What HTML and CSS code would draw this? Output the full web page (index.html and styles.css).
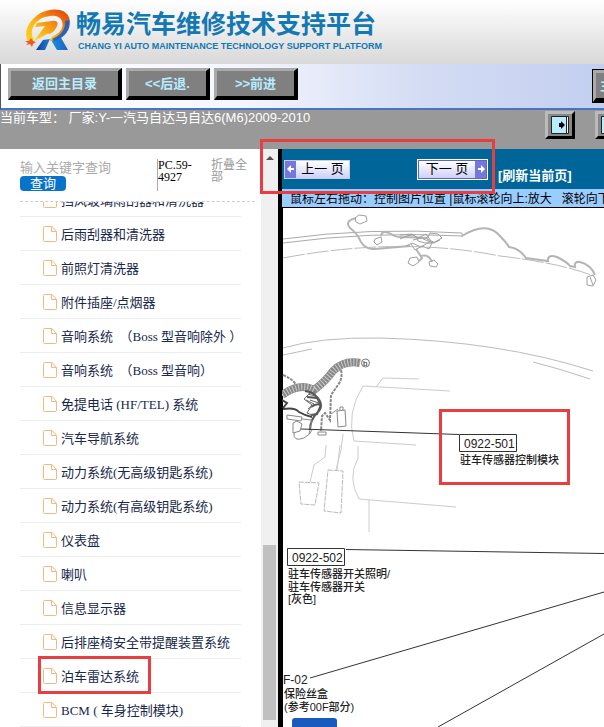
FILE: index.html
```html
<!DOCTYPE html>
<html lang="zh-CN">
<head>
<meta charset="utf-8">
<title>畅易汽车维修技术支持平台</title>
<link rel="stylesheet" href="styles.css">
</head>
<body>
<header class="banner">
  <svg class="logo" width="46" height="42" viewBox="0 0 46 42" aria-hidden="true">
    <defs>
      <linearGradient id="fire" x1="0" y1="1" x2="1" y2="0"><stop offset="0" stop-color="#ffd21a"/><stop offset=".4" stop-color="#fdb913"/><stop offset=".75" stop-color="#ee6a10"/><stop offset="1" stop-color="#dc3c0c"/></linearGradient>
      <linearGradient id="ice" x1="0" y1="0" x2="1" y2="0"><stop offset="0" stop-color="#123b9c"/><stop offset=".5" stop-color="#1b8fe0"/><stop offset="1" stop-color="#1e5fc0"/></linearGradient>
      <linearGradient id="bolt" x1="0" y1="1" x2="1" y2="0"><stop offset="0" stop-color="#ffdf20"/><stop offset="1" stop-color="#f07a10"/></linearGradient>
    </defs>
    <path d="M11 41 L18 31 L25 30 L20 41 Z M26 31 L35 27 L43 41 L32 41 Z" fill="url(#ice)"/>
    <path d="M4 34 C-2 25 2 13 14 5 C26 -2 42 -1 44.500 10 C46 21 37 30 24 32 L28 27 C36 24 39 18 37 12 C34 5 25 6 17 9 C8 14 4 23 9 31 Z" fill="url(#fire)"/>
    <path d="M40 12 C41 20 36 26 27 30 L30 32 C40 28 46 21 44.500 11 Z" fill="#2b62b5"/>
    <path d="M12 14 L27 12 C33 11 34 15 31 19 C29 23 26 25 22 25 L9 32 L20 17 L10 18 Z" fill="url(#bolt)"/>
    <path d="M0 32 L4 32 L6 29 L8 32 L11 33 L8 35 L7 38 L5 35 L1 36 L3 34 Z" fill="#ee5a20"/>
  </svg>
  <div class="brand">
    <h1 class="brand-name">畅易汽车维修技术支持平台</h1>
    <p class="brand-sub">CHANG YI AUTO MAINTENANCE TECHNOLOGY SUPPORT PLATFORM</p>
  </div>
</header>
<nav class="toolbar">
  <button class="bevel bevel-wide">返回主目录</button>
  <button class="bevel">&lt;&lt;后退.</button>
  <button class="bevel">&gt;&gt;前进</button>
  <button class="bevel bevel-last">主页</button>
</nav>
<div class="status">
  <p class="model">当前车型： 厂家:Y-一汽马自达马自达6(M6)2009-2010</p>
  <div class="panes">
    <button class="pane" aria-label="展开"><svg width="18" height="18" viewBox="0 0 18 18"><path d="M.5.5h17v17H.5z" fill="#b8ecff" stroke="#222"/><path d="M15.500 1v16" stroke="#222"/><path d="M16.500 1v16" stroke="#fff"/><path d="M8 7h2V5l4 4-4 4v-2H8z"/></svg></button>
    <button class="pane" aria-label="收起"><svg width="18" height="18" viewBox="0 0 18 18"><path d="M.5.5h17v17H.5z" fill="#b8ecff" stroke="#222"/><path d="M10 7H7V4L3 9l4 5v-3h3z"/></svg></button>
  </div>
</div>
<main class="main">
  <aside class="side">
    <form class="search">
      <div class="field">
        <input class="query" type="text" placeholder="输入关键字查询" aria-label="输入关键字查询">
        <button class="go" type="button">查询</button>
      </div>
      <span class="code">PC.59-4927</span>
      <a class="fold" href="#">折叠全部</a>
    </form>
    <svg class="defs" width="0" height="0" aria-hidden="true"><symbol id="doc" viewBox="0 0 14 16"><path d="M.5 1.500q0-1 1-1H9l4.500 5v9q0 1-1 1h-11q-1 0-1-1zM8.500.5v5h5" fill="none" stroke="#f2b880"/></symbol></svg>
    <ul class="tree">
      <li><a href="#"><svg class="doc"><use href="#doc"/></svg>挡风玻璃雨刮器和清洗器</a></li>
      <li><a href="#"><svg class="doc"><use href="#doc"/></svg>后雨刮器和清洗器</a></li>
      <li><a href="#"><svg class="doc"><use href="#doc"/></svg>前照灯清洗器</a></li>
      <li><a href="#"><svg class="doc"><use href="#doc"/></svg>附件插座/点烟器</a></li>
      <li><a href="#"><svg class="doc"><use href="#doc"/></svg>音响系统　（Boss 型音响除外 ）</a></li>
      <li><a href="#"><svg class="doc"><use href="#doc"/></svg>音响系统　（Boss 型音响）</a></li>
      <li><a href="#"><svg class="doc"><use href="#doc"/></svg>免提电话 (HF/TEL) 系统</a></li>
      <li><a href="#"><svg class="doc"><use href="#doc"/></svg>汽车导航系统</a></li>
      <li><a href="#"><svg class="doc"><use href="#doc"/></svg>动力系统(无高级钥匙系统)</a></li>
      <li><a href="#"><svg class="doc"><use href="#doc"/></svg>动力系统(有高级钥匙系统)</a></li>
      <li><a href="#"><svg class="doc"><use href="#doc"/></svg>仪表盘</a></li>
      <li><a href="#"><svg class="doc"><use href="#doc"/></svg>喇叭</a></li>
      <li><a href="#"><svg class="doc"><use href="#doc"/></svg>信息显示器</a></li>
      <li><a href="#"><svg class="doc"><use href="#doc"/></svg>后排座椅安全带提醒装置系统</a></li>
      <li class="marked"><a href="#"><svg class="doc"><use href="#doc"/></svg>泊车雷达系统</a></li>
      <li><a href="#"><svg class="doc"><use href="#doc"/></svg>BCM ( 车身控制模块)</a></li>
    </ul>
  </aside>
  <div class="scroll"><i class="up"></i><i class="thumb"></i></div>
  <section class="viewer">
    <div class="pager">
      <button class="turn"><span class="arrow"><svg width="8" height="10" viewBox="0 0 8 10"><path d="M0 5l4-4v3h3v2H4v3z" fill="#fff"/></svg></span><span class="turn-text">上一 页</span></button>
      <button class="turn turn-next"><span class="turn-text">下一 页</span><span class="arrow"><svg width="8" height="10" viewBox="0 0 8 10"><path d="M8 5L4 1v3H1v2h3v3z" fill="#fff"/></svg></span></button>
      <a class="reload" href="#">[刷新当前页]</a>
    </div>
    <p class="hint">鼠标左右拖动：控制图片位置 |鼠标滚轮向上:放大 &nbsp; 滚轮向下:缩小</p>
    <svg class="diagram" viewBox="282 208 322 519" role="img" aria-label="驻车传感器位置图">
      <g fill="none" stroke="#aaa" stroke-width="1">
        <path d="M283 239Q370 227 462 233M283 243Q370 231 462 236M462 233v4"/>
        <path d="M283 258Q400 236 500 256Q560 263 594 276" stroke="#bbb" stroke-dasharray="22 2"/>
        <path d="M283 348Q320 337 380 338Q500 341 593 371M283 355l29-6M533 362q28 7 57 17" stroke="#bbb"/>
        <path d="M376 387l7-9 36 1M450 391l-87-5q-17 27-9 55l62 4M358 446v12q-11 20 1 41l97 8M369 500v32" stroke="#ccc"/>
        <path d="M326 445l-1 12-11 8-4 17M343 434l-2 16-5 20M340 445l-3 25" stroke="#ccc"/>
        <path d="M299 482l20 1-4 22-14-1zM328 470l15 1-2 42-17-2z" stroke="#bbb" stroke-dasharray="5 1"/>
      </g>
      <g fill="none" stroke="#b4b4b4" stroke-width="2">
        <path d="M356 218q-12 3-6 10 7 5 11 14 5 8 14 7l35-3M381 236q1-7 10-2 6 4 14 3l22 1M462 236q22-14 35-3 10 10 12 14 10 1 17 11l22 3q-1-7 9-4 10 5 13 9l5 1q-1-6 5-5 11 3 15 13M416 249l6 9-3 3M421 256q8-2 11 6"/>
        <g stroke-width="1" stroke="#a0a0a0"><path d="M355 218l4-3 7 1 1 5-7 3-4-2zM375 239l6-2 1 5-5 3-3-3zM410 258l7-1 2 5-6 4-5-3zM429 262l5-2 4 4-2 3-6-1zM587 277l6-2 3 5-3 6-6-1zM590 277l3 8"/>
        <path d="M400 235l12-1 6 4 8-4 5 7-10 6-9-4-6 3M413 240l8-2 12 5 9-5-4-4-8-1-3 6 8 4M411 244l4 6 7-4 7 3 4-8M400 239q16-9 18 2 13 5 22-1"/></g>
      </g>
      <g fill="none">
        <path d="M282 395Q300 382 314 390Q326 381 333 371Q344 360 360 363" stroke="#888" stroke-width="8"/>
        <path d="M282 395Q300 382 314 390Q326 381 333 371Q344 360 360 363" stroke="#ccc" stroke-width="7" stroke-dasharray="1 2"/>
        <path d="M283 375q10 4 14 11M341 370q2 8-3 15l-7 10-1 25-5-7-3 3-1 15" stroke="#888" stroke-width="2" stroke-dasharray="3 1"/>
        <path d="M282 400l5 3-4 5M283 409q12-2 16 3 7 4 13 5" stroke="#444" stroke-width="2"/>
        <path d="M305 391q8 1 12 6 8 9 0 16-7 7-7 17M307 397l10 1 4 7-4 9-6 1M311 407q6-4 9-2" stroke="#555" stroke-width="2"/>
        <path d="M308 394l10 3 1 6-9-3M306 400l8 4-6 5M310 393l-6 6 8 6-5 8 8 3" stroke="#666"/>
        <path d="M287 415l15 2-1 4-14-2zM302 419l10 1-3 14M293 423l4-2 5 3-2 7-7 2zM294 433q-1 9 10 5 7-4 8-8M337 411l8-1 1 16-8 1zM340 410v-3l3 0v4M318 432h8v3h-8zM331 414l7-5" stroke="#888"/>
        <circle cx="365.500" cy="363" r="4" stroke="#777"/>
      </g>
      <g fill="none" stroke="#333" stroke-width="1">
        <path d="M301 429l158 5.500M346 549.500l258 4M310 678l294-86M438 727l166-93"/>
        <path d="M459.500 434.500h57v17h-57zM287.500 548.500h57v17h-57z"/>
      </g>
      <g class="labels">
        <text class="ring" x="363" y="366">b</text>
        <text class="part" x="464" y="448">0922-501</text>
        <text class="note" x="460" y="464">驻车传感器控制模块</text>
        <text class="part" x="292" y="562">0922-502</text>
        <text class="note" x="288" y="578">驻车传感器开关照明/</text>
        <text class="note" x="288" y="591">驻车传感器开关</text>
        <text class="note" x="288" y="603">[灰色]</text>
        <text class="part" x="283" y="684">F-02</text>
        <text class="note" x="284" y="698">保险丝盒</text>
        <text class="note" x="284" y="711">(参考00F部分)</text>
      </g>
      <rect x="292" y="718" width="45" height="16" rx="3" fill="#185abd"/>
      <rect x="440.500" y="410.500" width="128" height="73" fill="none" stroke="#e83e42" stroke-width="3"/>
    </svg>
  </section>
  <div class="callout"></div>
</main>
</body>
</html>
```

FILE: styles.css
```css
* { box-sizing: border-box; }
body {
  margin: 0;
  height: 100vh;
  display: flex;
  flex-direction: column;
  overflow: hidden;
  background: #fff;
  font-family: "Liberation Sans", "Noto Sans CJK SC", sans-serif;
  font-size: 13px;
}
h1, p, ul { margin: 0; padding: 0; }
a { text-decoration: none; color: inherit; }
button { font: inherit; margin: 0; padding: 0; flex: none; }

.banner {
  flex: none;
  height: 64px;
  display: flex;
  gap: 5px;
  padding: 9px 0 0 25px;
  background: linear-gradient(#fff, #d8d8d8);
}
.logo { flex: none; }
.brand { color: #1478b2; white-space: nowrap; }
.brand-name { font-size: 25px; line-height: 30px; font-weight: 700; }
.brand-sub { font: bold 9px/14px "Liberation Sans", sans-serif; padding-left: 2px; }

.toolbar {
  flex: none;
  height: 46px;
  display: flex;
  gap: 4px;
  padding: 4px 0 0 7px;
  border-left: 1px solid #555;
  border-bottom: 2px solid #4a74c0;
  background: linear-gradient(90deg, #fff, #f4f6fe 40%, #d4dcf4 70%, #c3cff0);
  overflow: hidden;
}
.bevel {
  width: 84px;
  height: 32px;
  border: solid;
  border-width: 3px 4px 4px 3px;
  border-color: #aaa #000 #000 #aaa;
  background: #808080;
  color: #b8ecff;
  font-weight: 700;
  line-height: 24px;
}
.bevel-wide { width: 114px; }
.bevel-last { margin: 2px -73px 0 auto; text-align: left; outline: 1px solid #000; padding-left: 4px; }

.status {
  flex: none;
  height: 39px;
  display: flex;
  justify-content: space-between;
  background: #999;
  color: #fff;
  overflow: hidden;
}
.model { line-height: 15px; white-space: nowrap; }
.panes { display: flex; gap: 20px; padding-top: 1px; margin-right: -21px; }
.pane {
  width: 30px;
  height: 28px;
  display: grid;
  place-items: center;
  border: solid;
  border-width: 3px;
  border-color: #bbb #000 #000 #bbb;
  background: #888;
}

.main { flex: 1; min-height: 0; display: flex; position: relative; }
.side { flex: none; width: 261px; display: flex; flex-direction: column; overflow: hidden; }
.search {
  flex: none;
  height: 53px;
  display: flex;
  margin: 0 6px 0 20px;
  padding-top: 10px;
  border-bottom: 1px dashed #ccc;
}
.field { width: 137px; display: flex; flex-direction: column; align-items: flex-start; }
.query { width: 130px; height: 17px; border: 0; padding: 0; font: inherit; background: none; }
.query::placeholder { color: #aaa; }
.go { width: 46px; height: 15px; border: 0; border-radius: 4px; background: #0873cb; color: #fff; line-height: 15px; }
.code { width: 54px; height: 32px; padding-right: 14px; border-left: 1px solid #aaa; font: 12px/12px "Liberation Serif", serif; }
.fold { width: 38px; color: #999; font-size: 12px; line-height: 12px; }

.defs { position: absolute; }
.tree {
  flex: 1;
  min-height: 0;
  overflow: hidden;
  list-style: none;
  font-family: "Liberation Serif", "Noto Sans CJK SC", serif;
  color: #18284a;
}
.tree li { height: 34px; margin: 0 20px; border-bottom: 1px solid #eee; position: relative; }
.tree li:first-child { margin-top: -19px; }
.tree a { display: flex; align-items: center; gap: 4px; height: 33px; padding-left: 23px; white-space: nowrap; }
.doc { flex: none; width: 14px; height: 16px; }
.marked::after {
  content: "";
  position: absolute;
  left: 18px;
  top: -3px;
  width: 113px;
  height: 38px;
  border: 3px solid #e83e42;
  z-index: 1;
}
.tree .marked::after { box-sizing: border-box; }

.scroll { flex: none; width: 17px; display: flex; flex-direction: column; align-items: center; justify-content: space-between; padding: 7px 0; background: #f0f0f0; }
.up { border: 4px solid transparent; border-top: 0; border-bottom: 4px solid #505050; }
.thumb { width: 13px; height: 31%; background: #c0c0c0; }

.viewer { flex: 1; min-width: 0; border-left: 4px solid #000; box-shadow: inset 1px 0 #000; overflow: hidden; }
.pager { height: 40px; display: flex; align-items: center; padding-left: 2px; background: #069; }
.turn { width: 66px; height: 19px; display: flex; padding: 0; border: 1px solid #ccd; background: linear-gradient(#fff, #cfd0fa); color: #000; }
.turn-next { width: 71px; height: 21px; margin: 0 10px 0 67px; border: 2px solid #fff; outline: 1px solid #66a; outline-offset: -2px; }
.arrow { flex: none; width: 11px; align-self: stretch; display: grid; place-items: center; background: #7478dc; }
.turn-text { flex: 1; line-height: 16px; white-space: nowrap; }
.reload { color: #fff; font-weight: 700; padding-top: 10px; white-space: nowrap; }
.hint { height: 19px; padding-left: 8px; border-bottom: 1px solid #000; background: #9cf; font-size: 12px; line-height: 20px; white-space: nowrap; overflow: hidden; }
.diagram { display: block; width: 100%; height: auto; }
.labels { font-size: 12px; fill: #222; }
.note { font-size: 11px; font-weight: 500; }
.ring { font-size: 8px; }
.callout { position: absolute; left: 260px; top: -10px; width: 235px; height: 55px; border: 3px solid #e83e42; }
```
